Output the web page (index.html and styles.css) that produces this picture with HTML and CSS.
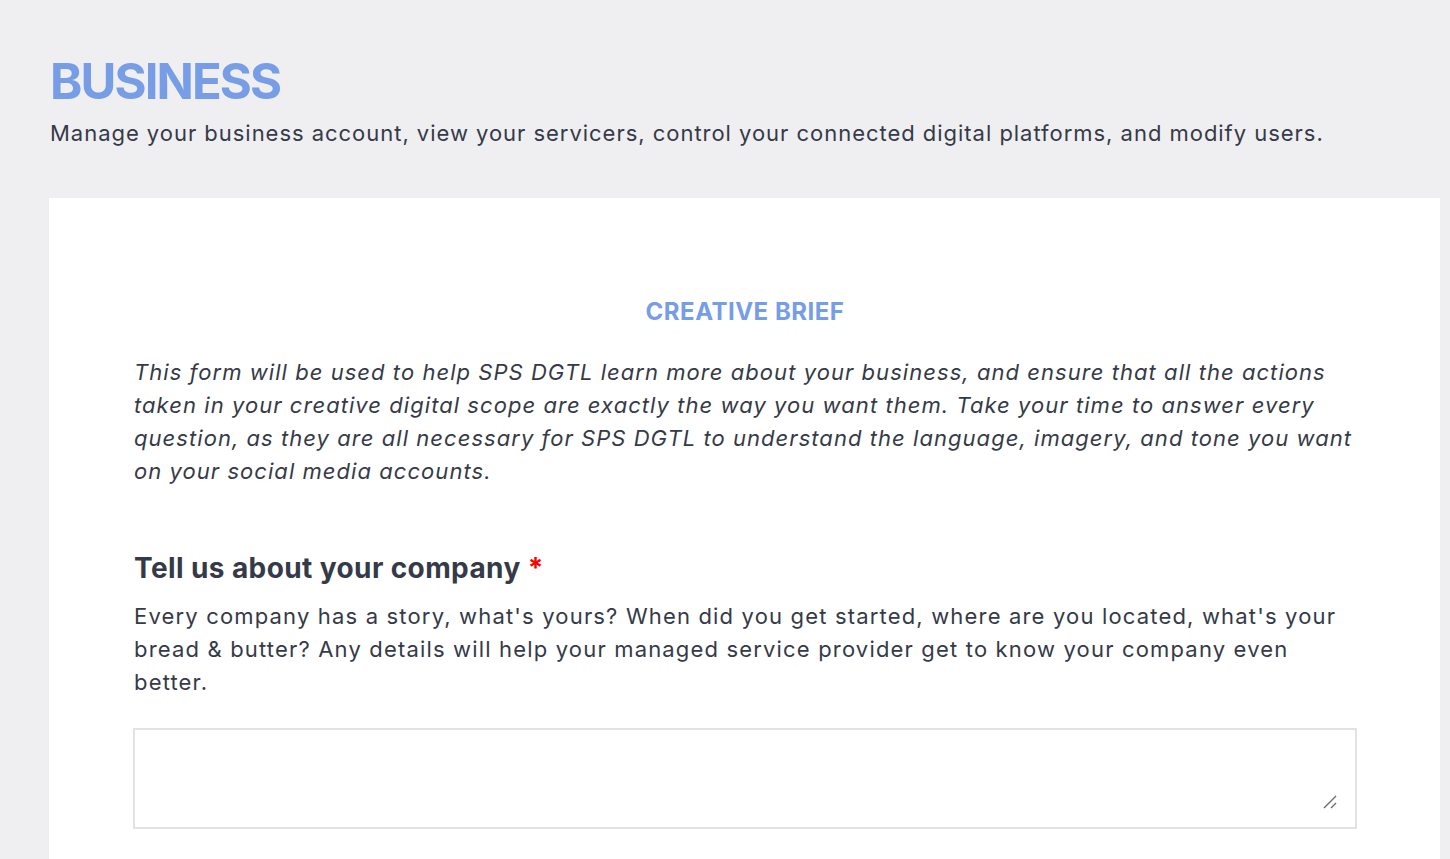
FILE: index.html
```html
<!DOCTYPE html>
<html lang="en">
<head>
<meta charset="utf-8">
<title>Business</title>
<link rel="stylesheet" href="styles.css">
</head>
<body>
<div class="page">
  <header class="page-header">
    <h1 class="page-title">BUSINESS</h1>
    <p class="page-subtitle">Manage your business account, view your servicers, control your connected digital platforms, and modify users.</p>
  </header>
  <main class="card">
    <h2 class="card-title">CREATIVE BRIEF</h2>
    <p class="intro">This form will be used to help SPS DGTL learn more about your business, and ensure that all the actions taken in your creative digital scope are exactly the way you want them. Take your time to answer every question, as they are all necessary for SPS DGTL to understand the language, imagery, and tone you want on your social media accounts.</p>
    <section class="field">
      <h3 class="field-label">Tell us about your company <span class="req">*</span></h3>
      <p class="field-help">Every company has a story, what's yours? When did you get started, where are you located, what's your bread &amp; butter? Any details will help your managed service provider get to know your company even better.</p>
      <div class="input-wrap">
        <textarea class="field-input"></textarea>
        <svg class="grip" width="14" height="14" viewBox="0 0 14 14"><path d="M1 13 L13 1 M8 13 L13 8" stroke="#6b6b6b" stroke-width="1.4" fill="none"/></svg>
      </div>
    </section>
  </main>
</div>
</body>
</html>
```
FILE: styles.css
```css
html, body {
  margin: 0;
  padding: 0;
  background: #efeff1;
  height: 100%;
  overflow: hidden;
}
body {
  font-family: "Inter", "Open Sans", sans-serif;
  color: #353a48;
}
.page {
  padding: 0 10px 0 49px;
}
.page-header {
  padding: 54px 0 50px 1px;
}
.page-title {
  margin: 0;
  font-size: 49px;
  font-weight: 700;
  line-height: 56px;
  letter-spacing: -1.9px;
  color: #769de6;
}
.page-subtitle {
  margin: 8px 0 0;
  font-size: 22px;
  line-height: 30px;
  letter-spacing: 0.97px;
}
.card {
  background: #fff;
  padding: 99px 84px 40px 85px;
  min-height: 700px;
}
.card-title {
  margin: 0;
  text-align: center;
  font-size: 24px;
  line-height: 30px;
  font-weight: 700;
  letter-spacing: 0.5px;
  color: #769de6;
}
.intro {
  margin: 29px 0 0;
  font-style: italic;
  font-size: 22px;
  line-height: 33px;
  letter-spacing: 1.05px;
}
.field {
  margin-top: 62px;
}
.field-label {
  margin: 0;
  font-size: 28px;
  line-height: 36px;
  font-weight: 700;
  letter-spacing: 0.4px;
}
.req {
  color: #f00;
}
.field-help {
  margin: 14px 0 0;
  font-size: 22px;
  line-height: 33px;
  letter-spacing: 1.17px;
}
.input-wrap {
  position: relative;
  margin: 29px 0 0 -1px;
}
.field-input {
  display: block;
  box-sizing: border-box;
  width: calc(100% + 1px);
  height: 101px;
  border: 2px solid #e2e2e2;
  background: #fff;
  resize: none;
  font-family: inherit;
  font-size: 18px;
}
.grip {
  position: absolute;
  right: 19px;
  bottom: 20px;
}
```
